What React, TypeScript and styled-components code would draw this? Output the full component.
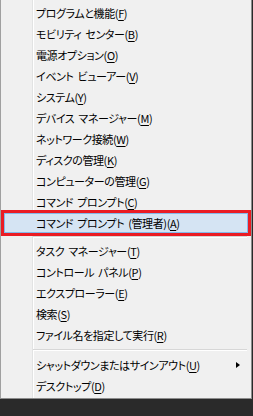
import React from "react";
import styled, { createGlobalStyle } from "styled-components";

const Global = createGlobalStyle`
  html, body { margin: 0; padding: 0; background: #2a2a2a; }
  body { width: 253px; height: 416px; overflow: hidden; }
`;

const Menu = styled.div`
  box-sizing: border-box;
  width: 252px;
  padding: 2px 0 1px;
  border-left: 1px solid #a0a0a0;
  border-right: 1px solid #8c8c8c;
  border-bottom: 1px solid #8c8c8c;
  background:
    linear-gradient(to right, transparent 31px, #e2e3e3 31px, #e2e3e3 32px, #ffffff 32px, #ffffff 33px, transparent 33px),
    #f0f0f0;
  font-family: "Noto Sans CJK JP", "Noto Sans", sans-serif;
  font-size: 11px;
  font-feature-settings: "palt";
  color: #000;
`;

const Row = styled.div<{ $active?: boolean }>`
  position: relative;
  box-sizing: border-box;
  display: flex;
  align-items: center;
  height: 20px;
  margin: 1px 3px;
  padding-left: 31px;
  border: 1px solid ${(p) => (p.$active ? "#84b9ea" : "transparent")};
  background: ${(p) => (p.$active ? "#d5e4f3" : "transparent")};
  white-space: nowrap;
  line-height: 1;

  ${(p) =>
    p.$active &&
    `
    &::after {
      content: "";
      position: absolute;
      box-sizing: border-box;
      left: -4px;
      right: -4px;
      top: -4px;
      bottom: -4px;
      border: 3px solid #ea1c24;
    }
  `}
`;

const Label = styled.span`
  letter-spacing: -0.4px;
  word-spacing: 2px;
`;

const Key = styled.span`
  text-decoration: underline;
  text-underline-offset: 2px;
`;

const Arrow = styled.span`
  margin-left: auto;
  margin-right: 7px;
  width: 0;
  height: 0;
  border-top: 3.5px solid transparent;
  border-bottom: 3.5px solid transparent;
  border-left: 4px solid #000;
`;

const Separator = styled.div<{ $h: number }>`
  height: ${(p) => p.$h}px;
  display: flex;
  align-items: center;
  padding: 0 4px 0 32px;
`;

const Line = styled.div`
  flex: 1;
  height: 1px;
  background: #d7d7d7;
  border-bottom: 1px solid #fff;
`;

type Item = { label: string; key: string; active?: boolean; sub?: boolean };

const group1: Item[] = [
  { label: "プログラムと機能", key: "F" },
  { label: "モビリティ センター", key: "B" },
  { label: "電源オプション", key: "O" },
  { label: "イベント ビューアー", key: "V" },
  { label: "システム", key: "Y" },
  { label: "デバイス マネージャー", key: "M" },
  { label: "ネットワーク接続", key: "W" },
  { label: "ディスクの管理", key: "K" },
  { label: "コンピューターの管理", key: "G" },
  { label: "コマンド プロンプト", key: "C" },
  { label: "コマンド プロンプト (管理者)", key: "A", active: true },
];

const group2: Item[] = [
  { label: "タスク マネージャー", key: "T" },
  { label: "コントロール パネル", key: "P" },
  { label: "エクスプローラー", key: "E" },
  { label: "検索", key: "S" },
  { label: "ファイル名を指定して実行", key: "R" },
];

const group3: Item[] = [
  { label: "シャットダウンまたはサインアウト", key: "U", sub: true },
  { label: "デスクトップ", key: "D" },
];

const MenuRow = ({ item }: { item: Item }) => (
  <Row $active={item.active}>
    <Label>
      {item.label}(<Key>{item.key}</Key>)
    </Label>
    {item.sub && <Arrow />}
  </Row>
);

export default function App() {
  return (
    <>
      <Global />
      <Menu>
        {group1.map((it) => (
          <MenuRow key={it.key} item={it} />
        ))}
        <Separator $h={6}>
          <Line />
        </Separator>
        {group2.map((it) => (
          <MenuRow key={it.key} item={it} />
        ))}
        <Separator $h={8}>
          <Line />
        </Separator>
        {group3.map((it) => (
          <MenuRow key={it.key} item={it} />
        ))}
      </Menu>
    </>
  );
}
